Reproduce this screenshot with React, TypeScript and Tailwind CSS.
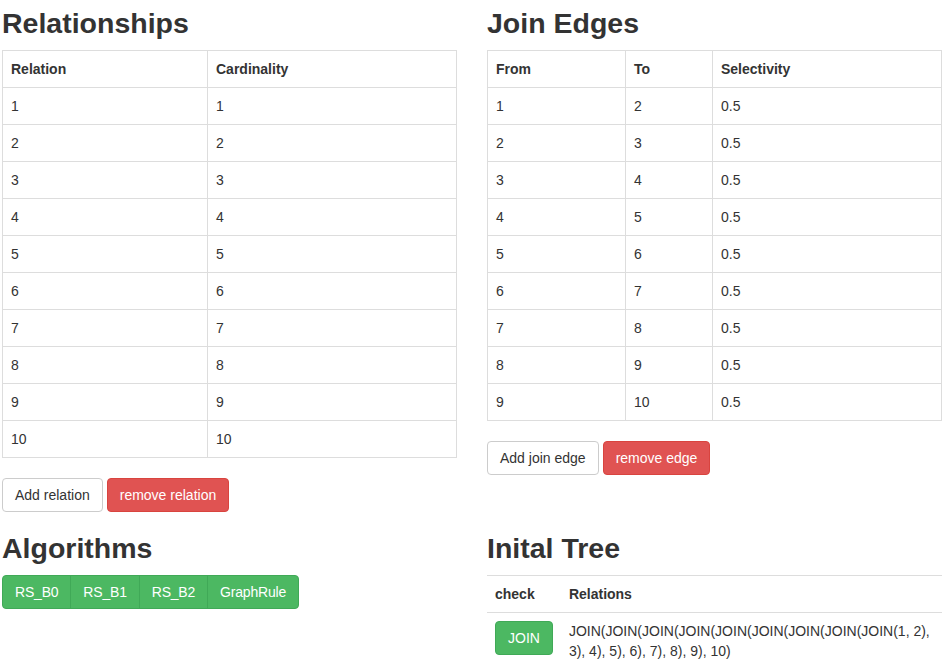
import React from 'react';

const relations = [1, 2, 3, 4, 5, 6, 7, 8, 9, 10];
const edges = [1, 2, 3, 4, 5, 6, 7, 8, 9].map((n) => ({ from: n, to: n + 1, sel: '0.5' }));
const algorithms = ['RS_B0', 'RS_B1', 'RS_B2', 'GraphRule'];

const cell = 'border border-[#ddd] px-2 py-2 text-left align-top leading-5';
const heading = 'm-0 mb-[10px] text-[28.5px] font-semibold leading-[33px] text-[#333]';

const App = () => {
  return (
    <div className="min-h-screen bg-white px-[2px] pt-[7px] font-['Liberation_Sans',Arial,sans-serif] text-sm text-[#333]">
      <div className="grid grid-cols-[455px_455px] items-start gap-x-[30px]">
        <section>
          <h2 className={heading}>Relationships</h2>
          <table className="w-full border-collapse border border-[#ddd]">
            <colgroup>
              <col className="w-[205px]" />
              <col />
            </colgroup>
            <thead>
              <tr>
                <th className={`${cell} font-bold`}>Relation</th>
                <th className={`${cell} font-bold`}>Cardinality</th>
              </tr>
            </thead>
            <tbody>
              {relations.map((r) => (
                <tr key={r}>
                  <td className={cell}>{r}</td>
                  <td className={cell}>{r}</td>
                </tr>
              ))}
            </tbody>
          </table>
          <div className="mt-[20px] flex gap-1">
            <button className="rounded-[4px] border border-[#ccc] bg-white px-3 py-1.5 leading-5 text-[#333]">
              Add relation
            </button>
            <button className="rounded-[4px] border border-[#d9443f] bg-[#e05352] px-3 py-1.5 leading-5 text-white">
              remove relation
            </button>
          </div>
        </section>

        <section>
          <h2 className={heading}>Join Edges</h2>
          <table className="w-full border-collapse border border-[#ddd]">
            <colgroup>
              <col className="w-[138px]" />
              <col className="w-[87px]" />
              <col />
            </colgroup>
            <thead>
              <tr>
                <th className={`${cell} font-bold`}>From</th>
                <th className={`${cell} font-bold`}>To</th>
                <th className={`${cell} font-bold`}>Selectivity</th>
              </tr>
            </thead>
            <tbody>
              {edges.map((e) => (
                <tr key={e.from}>
                  <td className={cell}>{e.from}</td>
                  <td className={cell}>{e.to}</td>
                  <td className={cell}>{e.sel}</td>
                </tr>
              ))}
            </tbody>
          </table>
          <div className="mt-[20px] flex gap-1">
            <button className="rounded-[4px] border border-[#ccc] bg-white px-3 py-1.5 leading-5 text-[#333]">
              Add join edge
            </button>
            <button className="rounded-[4px] border border-[#d9443f] bg-[#e05352] px-3 py-1.5 leading-5 text-white">
              remove edge
            </button>
          </div>
        </section>
      </div>

      <div className="mt-[20px] grid grid-cols-[455px_455px] items-start gap-x-[30px]">
        <section>
          <h2 className={heading}>Algorithms</h2>
          <div className="inline-flex">
            {algorithms.map((a, i) => (
              <button
                key={a}
                className={`border border-[#40a957] bg-[#4cb862] px-3 py-1.5 leading-5 tracking-[-0.2px] text-white ${
                  i === 0 ? 'rounded-l-[4px]' : '-ml-px'
                } ${i === algorithms.length - 1 ? 'rounded-r-[4px]' : ''}`}
              >
                {a}
              </button>
            ))}
          </div>
        </section>

        <section>
          <h2 className={heading}>Inital Tree</h2>
          <table className="w-full border-collapse">
            <thead>
              <tr>
                <th className="border-t border-[#ddd] px-2 py-2 text-left font-bold leading-5">check</th>
                <th className="border-t border-[#ddd] px-2 py-2 text-left font-bold leading-5">Relations</th>
              </tr>
            </thead>
            <tbody>
              <tr>
                <td className="border-t border-[#ddd] px-2 py-2 align-top">
                  <button className="rounded-[4px] border border-[#40a957] bg-[#4cb862] px-3 py-1.5 leading-5 text-white">
                    JOIN
                  </button>
                </td>
                <td className="border-t border-[#ddd] px-2 py-2 align-top leading-5">
                  JOIN(JOIN(JOIN(JOIN(JOIN(JOIN(JOIN(JOIN(JOIN(1, 2), 3), 4), 5), 6), 7), 8), 9), 10)
                </td>
              </tr>
            </tbody>
          </table>
        </section>
      </div>
    </div>
  );
};

export default App;
